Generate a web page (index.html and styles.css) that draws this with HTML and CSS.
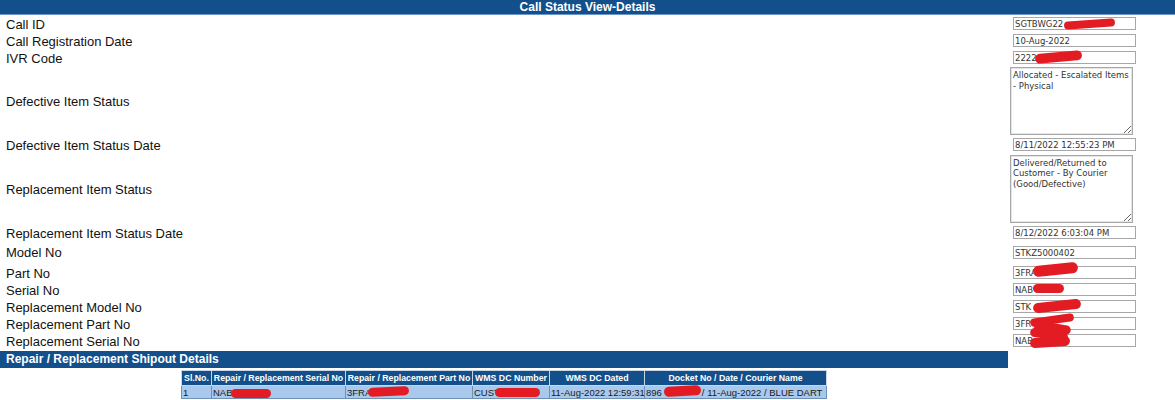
FILE: index.html
```html
<!DOCTYPE html>
<html>
<head>
<meta charset="utf-8">
<link rel="stylesheet" href="styles.css">
</head>
<body>
<div class="title">Call Status View-Details</div>
<div class="form">
  <div class="label h17">Call ID</div>
  <div class="value h17"><div class="field"><input class="box" value="SGTBWG22" readonly><span class="red r-call"></span></div></div>

  <div class="label h17">Call Registration Date</div>
  <div class="value h17"><div class="field"><input class="box" value="10-Aug-2022" readonly></div></div>

  <div class="label h17">IVR Code</div>
  <div class="value h17"><div class="field"><input class="box" value="2222" readonly><span class="red r-ivr"></span></div></div>

  <div class="label h70">Defective Item Status</div>
  <div class="value h70"><textarea class="area" readonly>Allocated - Escalated Items - Physical</textarea></div>

  <div class="label h17">Defective Item Status Date</div>
  <div class="value h17"><div class="field"><input class="box" value="8/11/2022 12:55:23 PM" readonly></div></div>

  <div class="label h71">Replacement Item Status</div>
  <div class="value h71"><textarea class="area" readonly>Delivered/Returned to Customer - By Courier (Good/Defective)</textarea></div>

  <div class="label h17">Replacement Item Status Date</div>
  <div class="value h17"><div class="field"><input class="box" value="8/12/2022 6:03:04 PM" readonly></div></div>

  <div class="label h23 model">Model No</div>
  <div class="value h23 model"><div class="field"><input class="box" value="STKZ5000402" readonly></div></div>

  <div class="label h17">Part No</div>
  <div class="value h17"><div class="field"><input class="box" value="3FRA" readonly><span class="red r-part"></span></div></div>

  <div class="label h17">Serial No</div>
  <div class="value h17"><div class="field"><input class="box" value="NAB" readonly><span class="red r-serial"></span></div></div>

  <div class="label h17">Replacement Model No</div>
  <div class="value h17"><div class="field"><input class="box" value="STK" readonly><span class="red r-rmodel"></span></div></div>

  <div class="label h17">Replacement Part No</div>
  <div class="value h17"><div class="field"><input class="box" value="3FR" readonly><span class="red r-rpart1"></span><span class="red r-rpart2"></span></div></div>

  <div class="label h17">Replacement Serial No</div>
  <div class="value h17"><div class="field"><input class="box" value="NAB" readonly><span class="red r-rserial1"></span><span class="red r-rserial2"></span></div></div>
</div>
<div class="ship">
  <div class="shipbar">Repair / Replacement Shipout Details</div>
  <table class="grid">
    <thead>
      <tr>
        <th class="c1">Sl.No.</th>
        <th class="c2">Repair / Replacement Serial No</th>
        <th class="c3">Repair / Replacement Part No</th>
        <th class="c4">WMS DC Number</th>
        <th class="c5">WMS DC Dated</th>
        <th class="c6">Docket No / Date / Courier Name</th>
      </tr>
    </thead>
    <tbody>
      <tr>
        <td>1</td>
        <td class="rel">NAB<span class="red t-serial"></span></td>
        <td class="rel">3FRA<span class="red t-part"></span></td>
        <td class="rel">CUST<span class="red t-dc"></span></td>
        <td>11-Aug-2022 12:59:31</td>
        <td class="rel">896<span class="gap"></span>/ 11-Aug-2022 / BLUE DART<span class="red t-docket"></span></td>
      </tr>
    </tbody>
  </table>
</div>
</body>
</html>
```

FILE: styles.css
```css
html, body {
  margin: 0;
  padding: 0;
  background: #ffffff;
}
body {
  font-family: "Liberation Sans", Arial, sans-serif;
  color: #000;
}
.title {
  height: 14px;
  line-height: 14px;
  background: #134f8b;
  border-bottom: 1px solid #6d98c9;
  color: #ffffff;
  font-weight: bold;
  font-size: 12px;
  text-align: center;
}
.form {
  display: grid;
  grid-template-columns: 1008px 1fr;
}
.label {
  display: flex;
  align-items: center;
  padding-left: 6px;
  padding-top: 1px;
  box-sizing: border-box;
  font-size: 13px;
  color: #111;
}
.value {
  display: flex;
  align-items: center;
}
.h17 { height: 17px; }
.h23 { height: 23px; }
.h70 { height: 70px; }
.h71 { height: 71px; }
.model.value { align-items: flex-start; padding-top: 5px; box-sizing: border-box; }
.model.label { align-items: flex-start; padding-top: 4px; box-sizing: border-box; }
.field {
  position: relative;
  margin-left: 5px;
  width: 123px;
  height: 13px;
}
.box {
  display: block;
  box-sizing: border-box;
  width: 123px;
  height: 13px;
  margin: 0;
  padding: 0 1px;
  border: 1px solid #a7a7a7;
  font-family: "DejaVu Sans", Verdana, sans-serif;
  font-size: 8.5px;
  color: #333;
  background: #fff;
  outline: none;
}
.area {
  box-sizing: border-box;
  margin: 0 0 0 2px;
  width: 123px;
  height: 68px;
  padding: 2px 2px;
  border: 1px solid #a7a7a7;
  box-shadow: inset 0 0 0 1px #e4e4e4;
  font-family: "DejaVu Sans", Verdana, sans-serif;
  font-size: 8.5px;
  line-height: 10.5px;
  color: #333;
  background: #fff;
  outline: none;
}
.ship {
  width: 1008px;
}
.shipbar {
  margin-top: 2px;
  height: 17px;
  line-height: 17px;
  background: #134f8b;
  color: #fff;
  font-weight: bold;
  font-size: 12px;
  padding-left: 6px;
}
.grid {
  margin: 2px auto 0;
  border-collapse: collapse;
  table-layout: fixed;
  width: 646px;
  font-size: 9.5px;
  border: 1px solid #8aa6c6;
}
.grid th {
  background: #134f8b;
  color: #fff;
  font-weight: bold;
  font-size: 8.75px;
  height: 14px;
  padding: 0 1px;
  border: 1px solid #c9d6e4;
  white-space: nowrap;
  overflow: hidden;
  text-align: center;
}
.grid td {
  background: #a9c9ec;
  color: #1a1a1a;
  height: 12px;
  padding: 0 1px;
  border: 1px solid #6f8fb5;
  white-space: nowrap;
  overflow: visible;
  text-align: left;
}
.c1 { width: 27px; }
.c2 { width: 131px; }
.c3 { width: 124px; }
.c4 { width: 74px; }
.c5 { width: 92px; }
.c6 { width: 179px; }
.rel { position: relative; }
.gap { display: inline-block; width: 40px; }
.red {
  position: absolute;
  background: #e31b23;
  border-radius: 6px;
}
.r-call { left: 51px; top: 3px; width: 51px; height: 8px; transform: rotate(-4deg); }
.r-ivr { left: 22px; top: 1px; width: 47px; height: 10px; transform: rotate(-5deg); }
.r-part { left: 20px; top: -2px; width: 45px; height: 11px; transform: rotate(-6deg); }
.r-serial { left: 20px; top: 1px; width: 31px; height: 9px; }
.r-rmodel { left: 20px; top: 1px; width: 48px; height: 10px; transform: rotate(-6deg); }
.r-rpart1 { left: 17px; top: -1px; width: 44px; height: 8px; transform: rotate(-8deg); }
.r-rpart2 { left: 20px; top: 6px; width: 38px; height: 9px; transform: rotate(10deg); }
.r-rserial1 { left: 17px; top: -4px; width: 38px; height: 9px; transform: rotate(8deg); }
.r-rserial2 { left: 17px; top: 3px; width: 40px; height: 10px; transform: rotate(-4deg); }
.t-serial { left: 19px; top: 3px; width: 40px; height: 9px; }
.t-part { left: 22px; top: 1px; width: 41px; height: 9px; transform: rotate(-3deg); }
.t-dc { left: 22px; top: 2px; width: 45px; height: 9px; }
.t-docket { left: 19px; top: 0px; width: 37px; height: 10px; transform: rotate(-3deg); }
```
